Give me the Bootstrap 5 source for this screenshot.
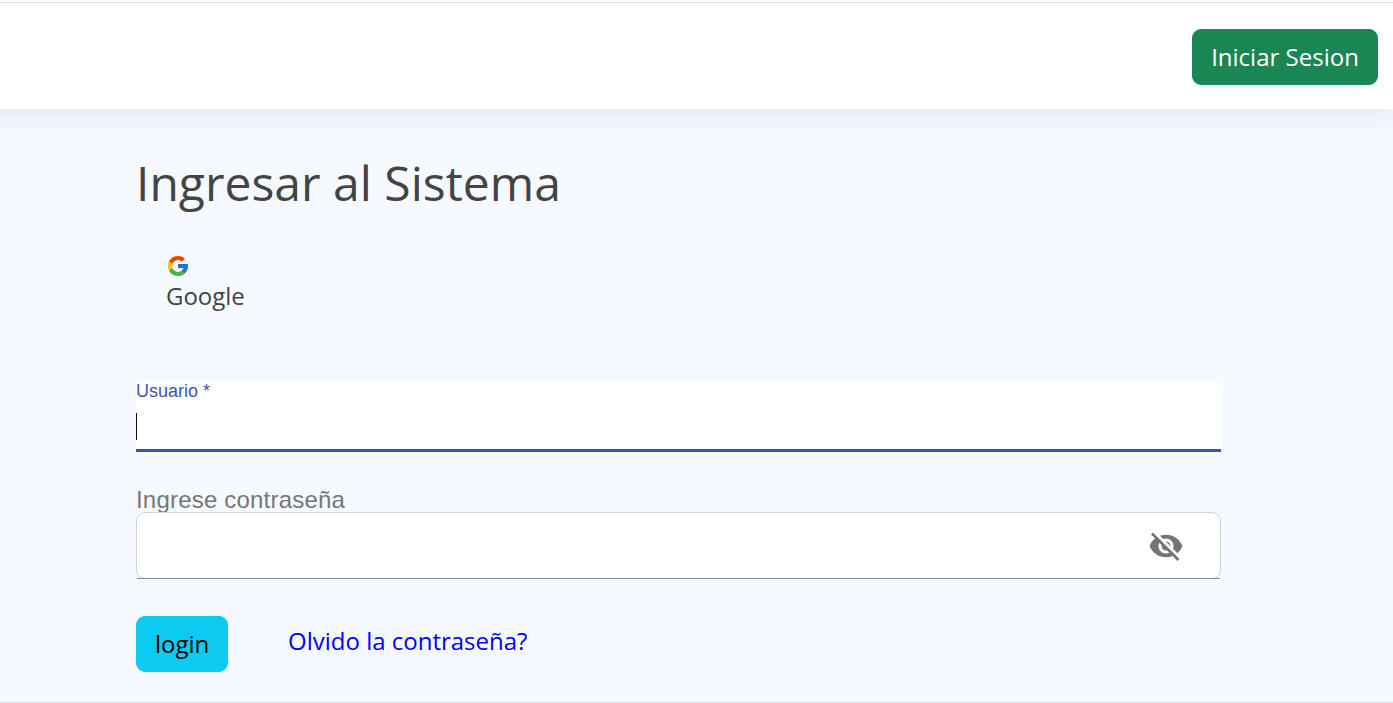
<!DOCTYPE html>
<html lang="es">
<head>
<meta charset="utf-8">
<meta name="viewport" content="width=device-width, initial-scale=1">
<title>Ingresar al Sistema</title>
<link href="https://cdn.jsdelivr.net/npm/bootstrap@5.3.0/dist/css/bootstrap.min.css" rel="stylesheet">
<style>
  body { font-family: "Open Sans", sans-serif; font-size: 24px; line-height: 36px; color: #444; background: #f6f9ff; height: 703px; overflow: hidden; border-top: 2px solid #fff; }
  .topbar { height: 107px; margin-left: -30px; padding: 1px 15px 0 0; background: #fff; border-top: 1px solid #dfe0e2; box-shadow: 0 3px 30px rgba(1,41,112,.1); }
  .btn { font-size: 24px; line-height: 36px; height: 56px; padding: 9px 18px 8px; border-radius: 9px; border-width: 1px; }
  .btn-success { width: 186px; }
  .btn-info { width: 92px; padding-top: 8px; }
  .login-area { margin-left: 136px; width: 1085px; padding-top: 45px; }
  h1 { font-size: 48px; line-height: 58px; font-weight: 400; margin: 0; letter-spacing: 0; }
  .google { margin: 42px 0 0 30px; line-height: 36px; }
  .google svg { display: block; }
  .google span { display: block; letter-spacing: -.05px; }
  .field-label { font-family: "Liberation Sans", Arial, sans-serif; }
  .user-field { height: 72px; margin-top: 66px; background: #fff; border-bottom: 3px solid #3f51b5; border-radius: 9px 9px 0 0; }
  .user-field .field-label { display: block; font-size: 18px; line-height: 22px; color: #3f51b5; }
  .caret { display: block; width: 1px; height: 27px; margin-top: 11px; background: #111; }
  .pass-label { display: block; font-size: 24px; line-height: 27px; height: 26px; margin-top: 34px; color: #757779; letter-spacing: .2px; }
  .pass-field { height: 67px; padding-right: 36px; background: #fff; border: 1px solid #ced4da; border-radius: 9px; }
  .pass-field::after { content: ""; position: absolute; left: 0; right: 0; bottom: -1px; height: 1px; background: #87888b; }
  .actions { padding-top: 37px; }
  .forgot { color: #00f; margin-left: 60px; margin-top: 7px; }
  .page-end { height: 1px; margin-top: 30px; background: #cfdff2; }
</style>
</head>
<body>
<header class="topbar d-flex align-items-center justify-content-end">
  <button class="btn btn-success">Iniciar Sesion</button>
</header>
<main class="login-area">
  <h1>Ingresar al Sistema</h1>
  <div class="google">
    <svg width="24" height="24" viewBox="0 0 48 48">
      <path fill="#FFC107" d="M43.611 20.083H42V20H24v8h11.303C33.654 32.657 29.223 36 24 36c-6.627 0-12-5.373-12-12s5.373-12 12-12c3.059 0 5.842 1.154 7.961 3.039l5.657-5.657C34.046 6.053 29.268 4 24 4 12.955 4 4 12.955 4 24s8.955 20 20 20 20-8.955 20-20c0-1.341-.138-2.65-.389-3.917z"/>
      <path fill="#FF3D00" d="M6.306 14.691l6.571 4.819C14.655 15.108 18.961 12 24 12c3.059 0 5.842 1.154 7.961 3.039l5.657-5.657C34.046 6.053 29.268 4 24 4 16.318 4 9.656 8.337 6.306 14.691z"/>
      <path fill="#4CAF50" d="M24 44c5.166 0 9.86-1.977 13.409-5.192l-6.19-5.238C29.211 35.091 26.715 36 24 36c-5.202 0-9.619-3.317-11.283-7.946l-6.522 5.025C9.505 39.556 16.227 44 24 44z"/>
      <path fill="#1976D2" d="M43.611 20.083H42V20H24v8h11.303c-.792 2.237-2.231 4.166-4.087 5.571l6.193 5.237C36.971 39.205 44 34 44 24c0-1.341-.138-2.65-.389-3.917z"/>
    </svg>
    <span>Google</span>
  </div>
  <div class="user-field">
    <span class="field-label">Usuario *</span>
    <span class="caret"></span>
  </div>
  <label class="field-label pass-label">Ingrese contraseña</label>
  <div class="pass-field position-relative d-flex align-items-center justify-content-end">
    <svg width="36" height="36" viewBox="0 0 24 24" fill="#757575"><path d="M12 7c2.76 0 5 2.24 5 5 0 .65-.13 1.26-.36 1.83l2.92 2.92c1.51-1.26 2.7-2.89 3.43-4.75-1.73-4.39-6-7.5-11-7.5-1.4 0-2.74.25-3.98.7l2.16 2.16C10.74 7.13 11.35 7 12 7zM2 4.27l2.28 2.28.46.46C3.08 8.3 1.78 10.02 1 12c1.73 4.39 6 7.5 11 7.5 1.55 0 3.03-.3 4.38-.84l.42.42L19.73 22 21 20.73 3.27 3 2 4.27zM7.53 9.8l1.55 1.55c-.05.21-.08.43-.08.65 0 1.66 1.34 3 3 3 .22 0 .44-.03.65-.08l1.55 1.55c-.67.33-1.41.53-2.2.53-2.76 0-5-2.24-5-5 0-.79.2-1.53.53-2.2zm4.31-.78l3.15 3.15.02-.16c0-1.66-1.34-3-3-3l-.17.01z"/></svg>
  </div>
  <div class="actions d-flex align-items-start">
    <button class="btn btn-info">login</button>
    <a class="forgot text-decoration-none" href="#">Olvido la contraseña?</a>
  </div>
</main>
<div class="page-end"></div>
<script src="https://cdn.jsdelivr.net/npm/bootstrap@5.3.0/dist/js/bootstrap.bundle.min.js"></script>
</body>
</html>
